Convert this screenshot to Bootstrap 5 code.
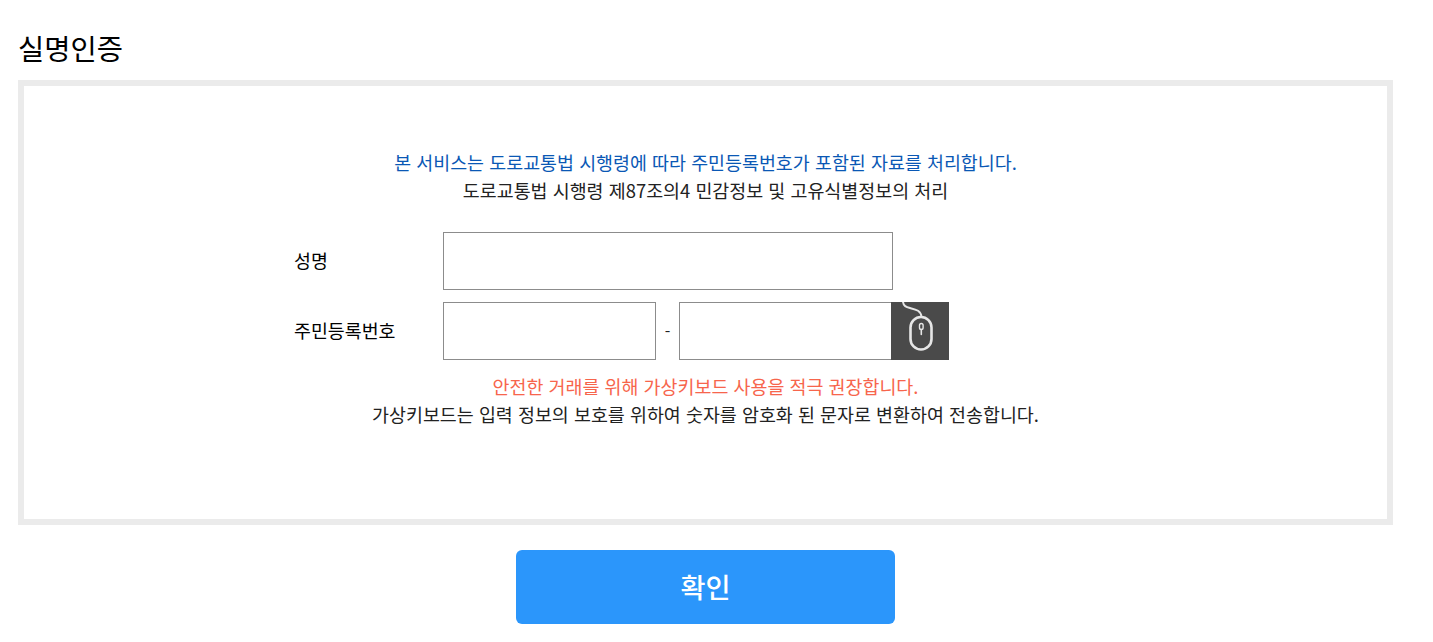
<!DOCTYPE html>
<html lang="ko">
<head>
    <meta charset="UTF-8">
    <meta name="viewport" content="width=device-width, initial-scale=1.0">
    <title>실명인증</title>
    <link href="https://cdn.jsdelivr.net/npm/bootstrap@5.3.0/dist/css/bootstrap.min.css" rel="stylesheet">
    <style>
        body { font-family: "Noto Sans CJK KR", "Noto Sans", sans-serif; color: #222; background: #fff; }
        .page-wrap { width: 1375px; margin-left: 18px; }
        .page-title { font-size: 28.5px; line-height: 40px; font-weight: 400; color: #000; margin: 28px 0 12px 0; }
        .auth-box { height: 445px; border: 6px solid #ebebeb; padding-top: 62px; }
        .notice { font-size: 18.43px; line-height: 28px; margin: 0; text-align: center; }
        .notice-blue { color: #0a58b5; }
        .notice-red { color: #f7654c; }
        .auth-form { margin: 28px 0 12px 270px; }
        .auth-row { height: 58px; margin-bottom: 12px; }
        .auth-row:last-child { margin-bottom: 0; }
        .auth-label { width: 149px; font-size: 18.4px; line-height: 26px; padding-bottom: 2px; color: #000; }
        .auth-input { height: 58px; border: 1px solid #8c8c8c; border-radius: 0; padding: 0 10px; }
        .auth-input:focus { outline: none; box-shadow: none; border-color: #8c8c8c; }
        .name-input { width: 450px; }
        .rrn-input { width: 213px; }
        .rrn-dash { width: 23px; text-align: center; font-size: 16px; }
        .mouse-btn { width: 58px; height: 58px; margin-left: -1px; background: #4a4a4a; border: 0; padding: 0; }
        .confirm-btn { width: 379px; height: 74px; margin-top: 25px; padding-bottom: 2px; background: #2b96fb; border: 0; border-radius: 6px; color: #fff; font-size: 27.2px; font-weight: 500; }
    </style>
</head>
<body>
    <div class="page-wrap">
        <h1 class="page-title">실명인증</h1>
        <div class="auth-box">
            <p class="notice notice-blue">본 서비스는 도로교통법 시행령에 따라 주민등록번호가 포함된 자료를 처리합니다.</p>
            <p class="notice">도로교통법 시행령 제87조의4 민감정보 및 고유식별정보의 처리</p>
            <form class="auth-form">
                <div class="auth-row d-flex align-items-center">
                    <label class="auth-label" for="userName">성명</label>
                    <input class="auth-input name-input" id="userName" type="text">
                </div>
                <div class="auth-row d-flex align-items-center">
                    <label class="auth-label" for="rrnFront">주민등록번호</label>
                    <input class="auth-input rrn-input" id="rrnFront" type="text">
                    <span class="rrn-dash">-</span>
                    <input class="auth-input rrn-input" id="rrnBack" type="password">
                    <button class="mouse-btn d-block" type="button" aria-label="가상키보드">
                        <svg class="d-block" width="58" height="58" viewBox="0 0 58 58" fill="none" stroke="#e6e6e6" stroke-linecap="round" stroke-linejoin="round">
                            <path d="M12 0 C12.5 4 15 5 19 6 C25 7.5 30 8.5 30.5 15" stroke-width="2"/>
                            <rect x="19.5" y="15" width="21" height="32.5" rx="10.5" stroke-width="2.6"/>
                            <rect x="28.5" y="21.5" width="3.6" height="6" rx="1.8" stroke-width="1.4"/>
                            <path d="M30.3 27.5 V32.5" stroke-width="1.6"/>
                        </svg>
                    </button>
                </div>
            </form>
            <p class="notice notice-red">안전한 거래를 위해 가상키보드 사용을 적극 권장합니다.</p>
            <p class="notice">가상키보드는 입력 정보의 보호를 위하여 숫자를 암호화 된 문자로 변환하여 전송합니다.</p>
        </div>
        <div class="d-flex justify-content-center">
            <button class="confirm-btn" type="button">확인</button>
        </div>
    </div>
    <script src="https://cdn.jsdelivr.net/npm/bootstrap@5.3.0/dist/js/bootstrap.bundle.min.js"></script>
</body>
</html>
